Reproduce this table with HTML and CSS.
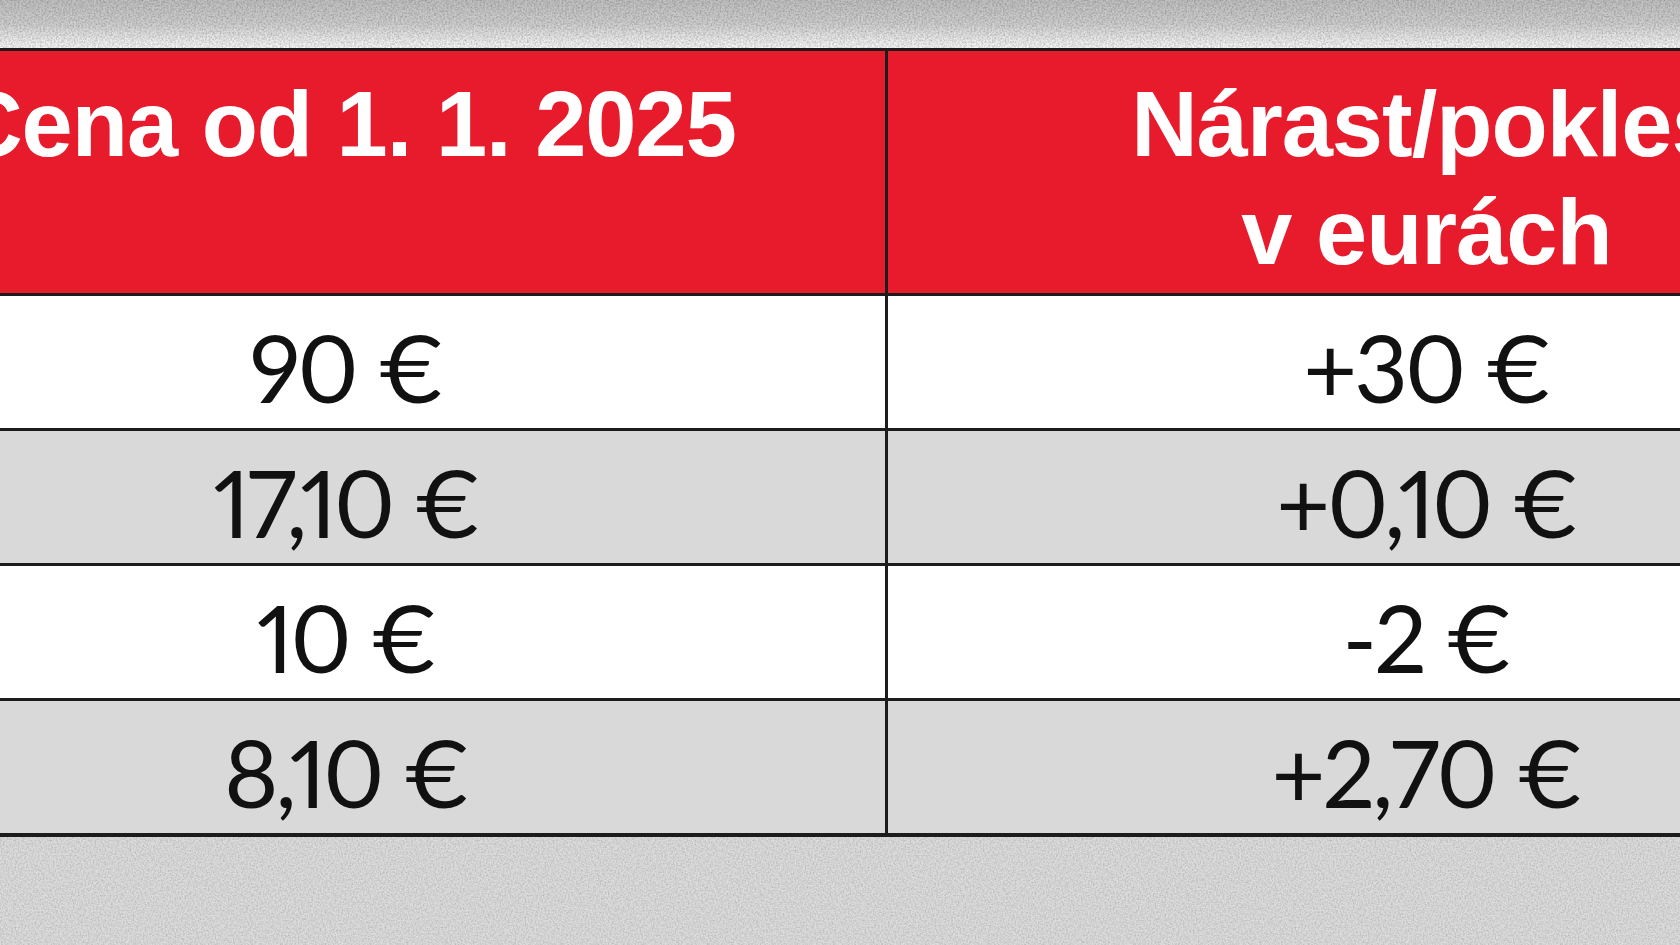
FILE: index.html
```html
<!DOCTYPE html>
<html lang="sk">
<head>
<meta charset="utf-8">
<title>Ceny od 1. 1. 2025</title>
<link rel="stylesheet" href="styles.css">
</head>
<body>
<div class="page">
  <div class="strip strip-top">
    <svg class="noise" width="100%" height="100%" preserveAspectRatio="none">
      <defs>
        <filter id="grain" x="0" y="0" width="100%" height="100%">
          <feTurbulence type="fractalNoise" baseFrequency="0.55" numOctaves="3" seed="4"/>
          <feColorMatrix type="matrix" values="0 0 0 0 0  0 0 0 0 0  0 0 0 0 0  0 0 0 -1.6 1.05"/>
        </filter>
        <linearGradient id="topfade" x1="0" y1="0" x2="0" y2="1">
          <stop offset="0" stop-color="#c0c0c0"/>
          <stop offset="0.5" stop-color="#cfcfcf"/>
          <stop offset="0.8" stop-color="#e8e8e8"/>
          <stop offset="1" stop-color="#f6f6f6"/>
        </linearGradient>
      </defs>
      <rect width="100%" height="100%" fill="url(#topfade)"/>
      <rect width="100%" height="100%" filter="url(#grain)" opacity="0.25"/>
    </svg>
  </div>

  <table class="prices">
    <thead>
      <tr>
        <th class="col-left">Cena od 1. 1. 2025</th>
        <th class="col-right">Nárast/pokles<br>v eurách</th>
      </tr>
    </thead>
    <tbody>
      <tr class="row-white"><td>90 €</td><td>+30 €</td></tr>
      <tr class="row-gray"><td>17,10 €</td><td>+0,10 €</td></tr>
      <tr class="row-white"><td>10 €</td><td>-2 €</td></tr>
      <tr class="row-gray"><td>8,10 €</td><td>+2,70 €</td></tr>
    </tbody>
  </table>

  <div class="strip strip-bottom">
    <svg class="noise" width="100%" height="100%" preserveAspectRatio="none">
      <defs>
        <filter id="grain2" x="0" y="0" width="100%" height="100%">
          <feTurbulence type="fractalNoise" baseFrequency="0.6" numOctaves="3" seed="9"/>
          <feColorMatrix type="matrix" values="0 0 0 0 0  0 0 0 0 0  0 0 0 0 0  0 0 0 -1.6 1.05"/>
        </filter>
      </defs>
      <rect width="100%" height="100%" fill="#dcdcdc"/>
      <rect width="100%" height="100%" filter="url(#grain2)" opacity="0.18"/>
    </svg>
  </div>
</div>
</body>
</html>
```
FILE: styles.css
```css
html, body {
  margin: 0;
  padding: 0;
  width: 1680px;
  height: 945px;
  overflow: hidden;
  background: #d4d4d4;
}

.page {
  display: flex;
  flex-direction: column;
  width: 1680px;
  height: 945px;
  overflow: hidden;
}

.strip {
  flex: none;
  width: 1680px;
  line-height: 0;
}

.strip-top {
  height: 48px;
}

.strip-bottom {
  flex: 1;
}

.noise {
  display: block;
}

.prices {
  flex: none;
  border-collapse: collapse;
  margin-left: -196px;
  width: 2164px;
  table-layout: fixed;
}

.prices th,
.prices td {
  padding: 0;
  text-align: center;
  border-left: 3px solid #1c1c1c;
  border-right: 3px solid #1c1c1c;
}

.prices .col-left {
  width: 1081px;
}

.prices th {
  background: #e71b2b;
  color: #ffffff;
  font-family: "Liberation Sans", Arial, sans-serif;
  font-weight: 700;
  font-size: 92px;
  line-height: 108px;
  letter-spacing: -1px;
  vertical-align: top;
  height: 245px;
  padding-top: 19px;
  box-sizing: border-box;
  border-top: 3px solid #1c1c1c;
  border-bottom: 3px solid #1c1c1c;
}

.prices td {
  font-family: Lato, "Open Sans", sans-serif;
  font-weight: 400;
  font-size: 93px;
  font-variant-numeric: proportional-nums;
  letter-spacing: -3px;
  color: #111111;
  height: 122px;
  line-height: 1;
  padding-top: 10px;
  vertical-align: middle;
  border-bottom: 3px solid #1c1c1c;
}

.prices tbody tr:last-child td {
  border-bottom: 4px solid #1c1c1c;
}

.row-white td {
  background: #ffffff;
}

.row-gray td {
  background: #d9d9d9;
}
```
